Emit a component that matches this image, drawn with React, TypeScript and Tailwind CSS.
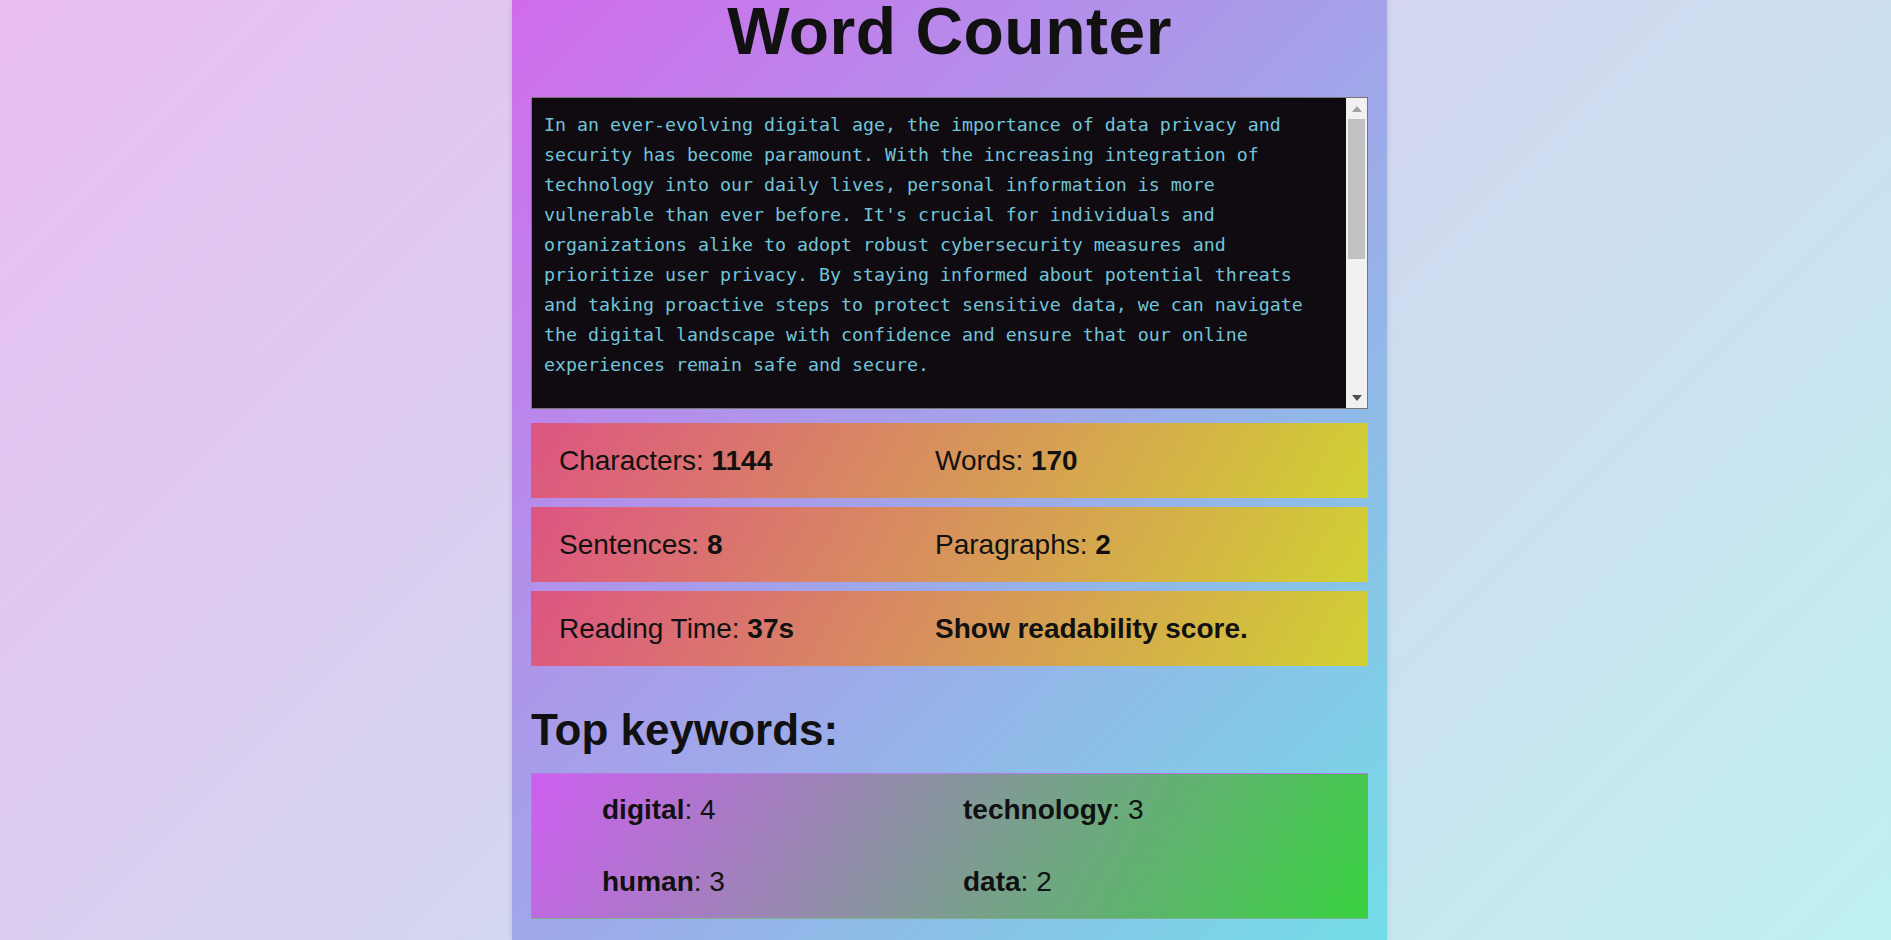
const sample = `In an ever-evolving digital age, the importance of data privacy and security has become paramount. With the increasing integration of technology into our daily lives, personal information is more vulnerable than ever before. It's crucial for individuals and organizations alike to adopt robust cybersecurity measures and prioritize user privacy. By staying informed about potential threats and taking proactive steps to protect sensitive data, we can navigate the digital landscape with confidence and ensure that our online experiences remain safe and secure.

At the same time, technology should serve human needs. Digital tools shape how every human being learns, works and connects, and responsible technology puts the human experience first. When we build digital products with care, we create a future that is both innovative and trustworthy for everyone.`;

const stats = [
  [
    { label: "Characters", value: "1144" },
    { label: "Words", value: "170" },
  ],
  [
    { label: "Sentences", value: "8" },
    { label: "Paragraphs", value: "2" },
  ],
];

const keywords = [
  { word: "digital", count: 4 },
  { word: "technology", count: 3 },
  { word: "human", count: 3 },
  { word: "data", count: 2 },
];

function Scrollbar() {
  return (
    <div className="w-[21px] bg-[#f1f1f1] flex flex-col">
      <div className="h-[21px] flex items-center justify-center">
        <svg width="10" height="6" viewBox="0 0 10 6">
          <polygon points="5,0 10,6 0,6" fill="#a3a3a3" />
        </svg>
      </div>
      <div className="h-[140px] ml-[2px] mr-[2px] bg-[#c1c1c1]" />
      <div className="flex-1" />
      <div className="h-[21px] flex items-center justify-center">
        <svg width="10" height="6" viewBox="0 0 10 6">
          <polygon points="0,0 10,0 5,6" fill="#505050" />
        </svg>
      </div>
    </div>
  );
}

function StatRow({ children }: { children: React.ReactNode }) {
  return (
    <div className="h-[75px] grid grid-cols-[376px_1fr] items-center pl-[28px] text-[28px] text-[#111] bg-[linear-gradient(120deg,#dd5582,#d1d133)]">
      {children}
    </div>
  );
}

export default function App() {
  return (
    <div className="min-h-screen flex justify-center pl-[8px] bg-[linear-gradient(135deg,#e9bdf0,#bff0f0)] font-['Liberation_Sans',Arial,sans-serif]">
      <main className="w-[875px] min-h-screen px-[19px] pb-5 bg-[linear-gradient(135deg,#d16bec,#73dde6)] shadow-[0_0_6px_rgba(0,0,0,0.12)]">
        <h1 className="-mt-[2px] text-center text-[66px] leading-none font-bold tracking-[0.5px] text-[#111]">
          Word Counter
        </h1>

        <div className="mt-[33px] h-[312px] flex border border-[#767676]">
          <textarea
            defaultValue={sample}
            spellCheck={false}
            className="flex-1 resize-none overflow-hidden outline-none bg-[#100b10] text-[#72c4d8] pl-[12px] pr-[27px] pt-[12px] text-[18.27px] leading-[30px] font-['DejaVu_Sans_Mono',monospace]"
          />
          <Scrollbar />
        </div>

        <div className="mt-[14px] flex flex-col gap-[9px]">
          {stats.map((row, i) => (
            <StatRow key={i}>
              {row.map((s) => (
                <div key={s.label}>
                  {s.label}: <b>{s.value}</b>
                </div>
              ))}
            </StatRow>
          ))}
          <StatRow>
            <div>
              Reading Time: <b>37s</b>
            </div>
            <div className="font-bold">Show readability score.</div>
          </StatRow>
        </div>

        <h2 className="mt-[42px] text-[44px] leading-none font-bold text-[#111]">
          Top keywords:
        </h2>

        <ul className="mt-[21px] grid grid-cols-[361px_1fr] pl-[70px] border border-t-[#b57ae6] border-b-[#7fb08a] border-l-[#55c655] border-r-[#b070e8] bg-[linear-gradient(120deg,#cd5ff0,#38d140)] text-[28px] text-[#111]">
          {keywords.map((k) => (
            <li key={k.word} className="h-[72px] flex items-center">
              <span>
                <b>{k.word}</b>: {k.count}
              </span>
            </li>
          ))}
        </ul>
      </main>
    </div>
  );
}
